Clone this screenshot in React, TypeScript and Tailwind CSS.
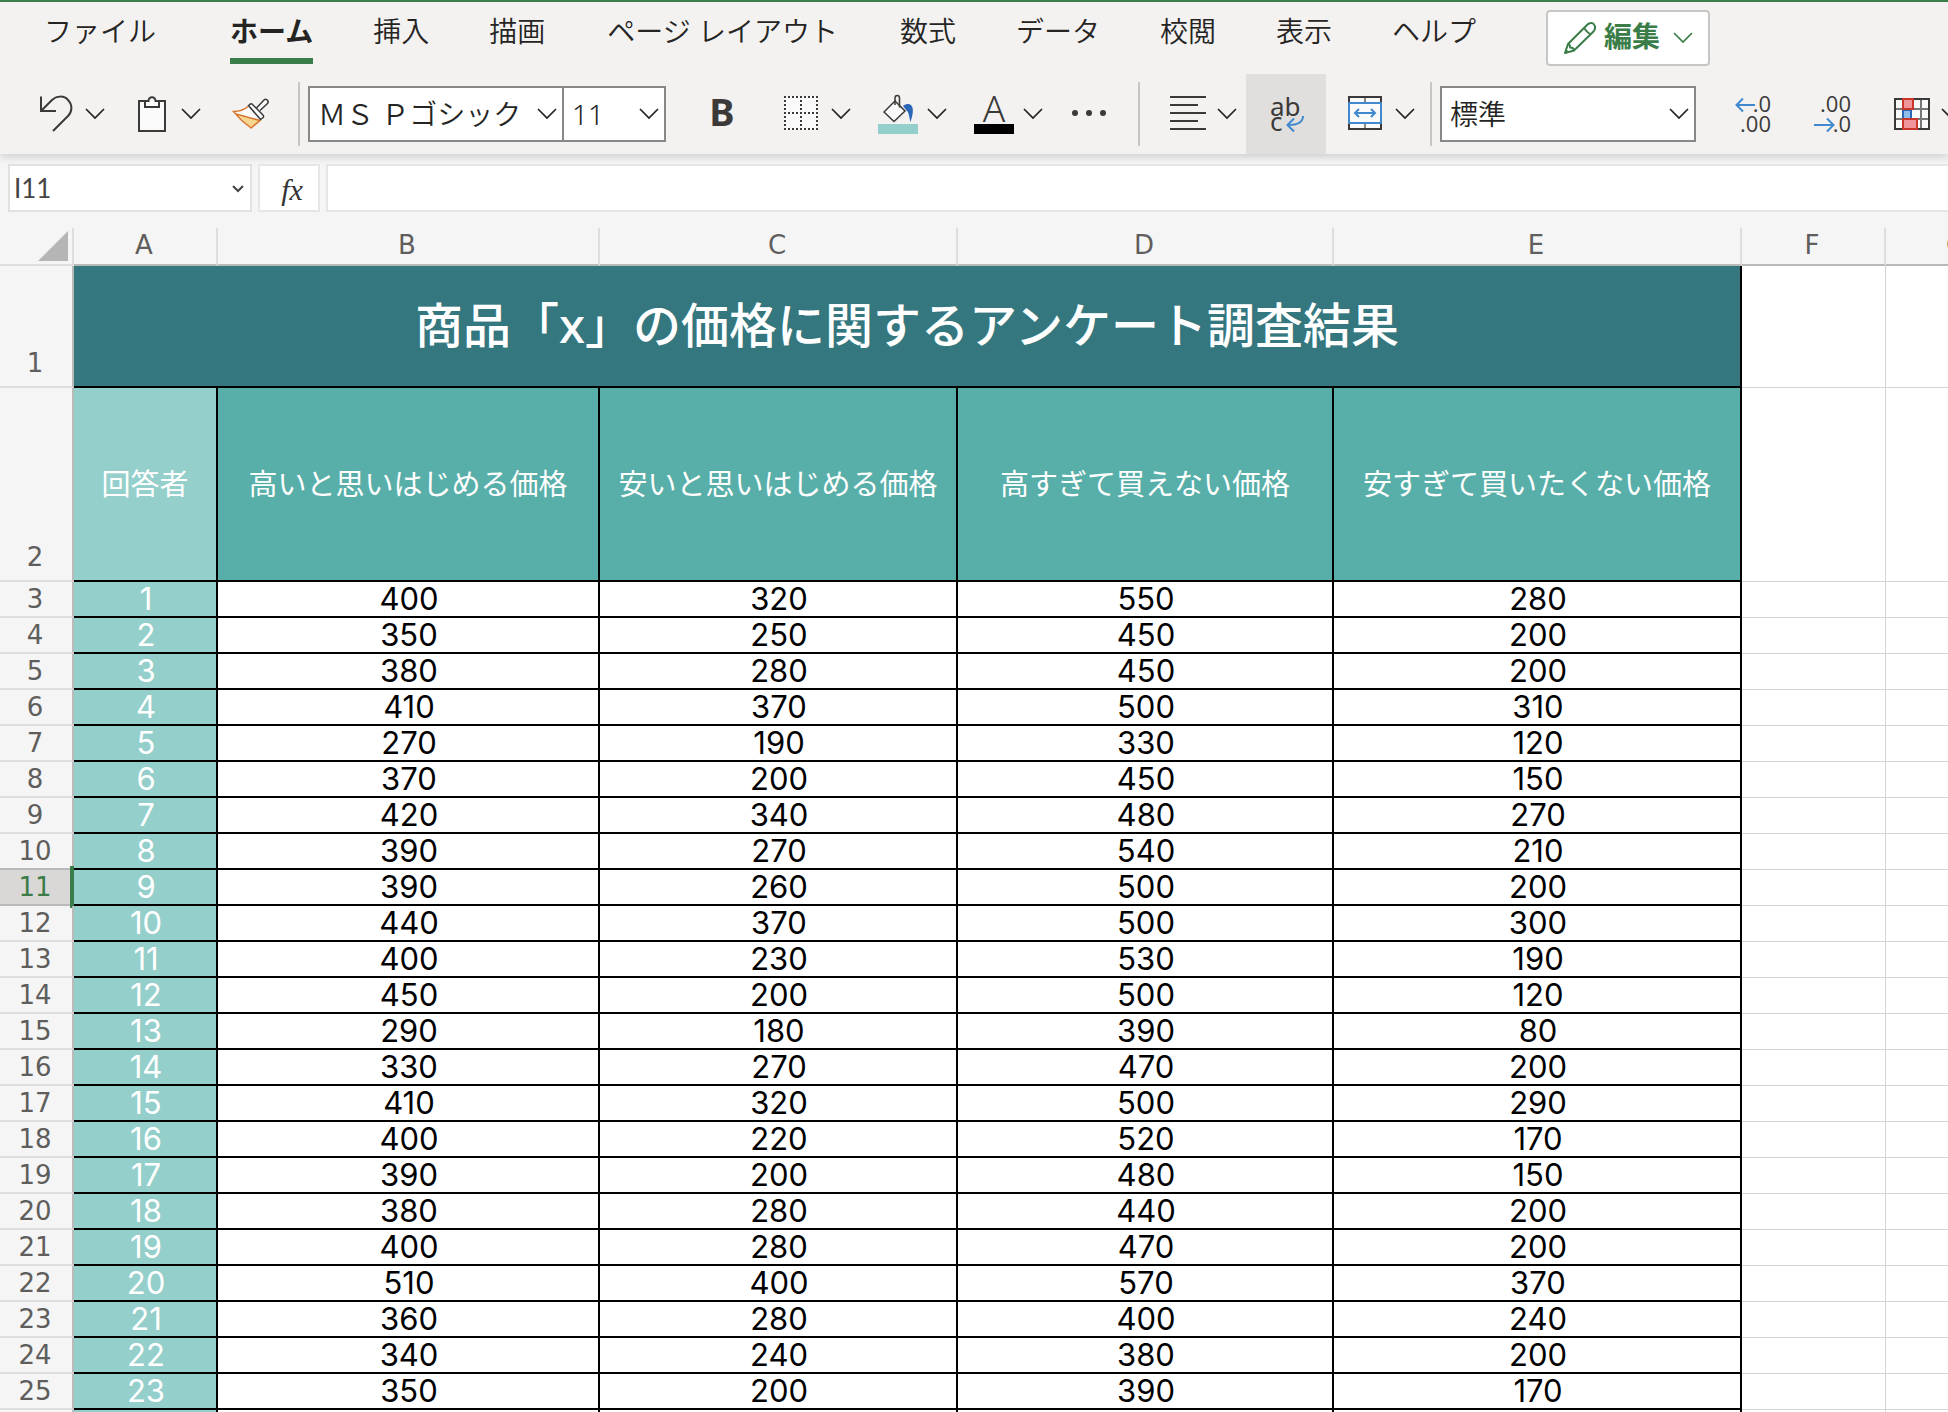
import React from 'react';

const tabs = ['ホーム', '挿入', '描画', 'ページ レイアウト', '数式', 'データ', '校閲', '表示', 'ヘルプ'];

const questions = ['高いと思いはじめる価格', '安いと思いはじめる価格', '高すぎて買えない価格', '安すぎて買いたくない価格'];

const answers = [
  [400, 320, 550, 280],
  [350, 250, 450, 200],
  [380, 280, 450, 200],
  [410, 370, 500, 310],
  [270, 190, 330, 120],
  [370, 200, 450, 150],
  [420, 340, 480, 270],
  [390, 270, 540, 210],
  [390, 260, 500, 200],
  [440, 370, 500, 300],
  [400, 230, 530, 190],
  [450, 200, 500, 120],
  [290, 180, 390, 80],
  [330, 270, 470, 200],
  [410, 320, 500, 290],
  [400, 220, 520, 170],
  [390, 200, 480, 150],
  [380, 280, 440, 200],
  [400, 280, 470, 200],
  [510, 400, 570, 370],
  [360, 280, 400, 240],
  [340, 240, 380, 200],
  [350, 200, 390, 170],
];

const SELECTED_ROW = 11;

function Chevron({ className = '' }: { className?: string }) {
  return (
    <svg aria-hidden="true" viewBox="0 0 22 22" className={`h-[22px] w-[22px] shrink-0 ${className}`} fill="none" stroke="currentColor" strokeWidth="1.7">
      <path d="M2 6 L11 15 L20 6" />
    </svg>
  );
}

function Icon({ children }: { children: React.ReactNode }) {
  return (
    <svg aria-hidden="true" viewBox="0 0 40 40" className="h-10 w-10 shrink-0 overflow-visible" fill="none" stroke="#3b3a39" strokeWidth="2">
      {children}
    </svg>
  );
}

function Tool({ label, className = '', split = false, children }: { label: string; className?: string; split?: boolean; children: React.ReactNode }) {
  return (
    <button type="button" aria-label={label} className={`flex h-20 shrink-0 items-center gap-2 ${className}`}>
      <Icon>{children}</Icon>
      {split && <Chevron />}
    </button>
  );
}

function Divider({ className }: { className: string }) {
  return <div className={`h-16 w-0.5 shrink-0 bg-[#c8c6c4] ${className}`} />;
}

function Picker({ label, value, className }: { label: string; value: string; className: string }) {
  return (
    <div className={`relative h-14 shrink-0 ${className}`}>
      <select aria-label={label} defaultValue={value} className="h-full w-full appearance-none border-2 border-[#8a8886] bg-white pr-8 pl-2 text-[28px] leading-9 font-[350]">
        <option>{value}</option>
      </select>
      <Chevron className="pointer-events-none absolute top-[17px] right-1.5" />
    </div>
  );
}

function Ribbon() {
  return (
    <header className="relative z-10 border-t-2 border-[#3a7d49] bg-[#f3f2f1] shadow-[0_3px_8px_rgba(0,0,0,0.16)]">
      <nav aria-label="リボン" className="flex h-[72px] items-start pl-3.5">
        <button type="button" className="mr-[14px] shrink-0 px-[30px] pt-[9px] text-[28px] leading-10 font-[350]">
          ファイル
        </button>
        {tabs.map((tab, i) => (
          <button
            key={tab}
            type="button"
            className={`shrink-0 pt-[9px] text-[28px] leading-10 ${tab.includes(' ') ? 'px-8' : 'px-[30px]'} ${i === 0 ? 'font-bold' : 'font-[350]'}`}
          >
            {tab}
            {i === 0 && <span className="mt-[7px] block h-1.5 bg-[#3a7d49]" />}
          </button>
        ))}
        <button type="button" className="mt-2 ml-10 flex h-14 shrink-0 items-center rounded border-2 border-[#c8c6c4] bg-white pr-3.5 pl-4 text-[28px] font-bold text-[#3a7d49]">
          <svg aria-hidden="true" viewBox="0 0 32 32" className="mr-2 h-8 w-8" fill="none" stroke="currentColor" strokeWidth="2" strokeLinejoin="round">
            <path d="M1 31 L4 22 L23 3 C26 0 29 1 30 2.500 C32 5 31 7.500 29.500 9.500 L10 28.500 Z" />
            <path d="M20 6 C22 9 24 11 26.500 12.500 M4 22 C5 22 6 23.500 6 25.500 C8.500 25.500 10 27 10 28.500 M1 31 L3.500 28.500" />
          </svg>
          <span className="pb-1 leading-9">編集</span>
          <Chevron className="ml-3" />
        </button>
      </nav>

      <div role="toolbar" aria-label="書式" className="flex h-20 items-center overflow-hidden pl-9">
        <Tool label="元に戻す" split>
          <path d="M5 2.500 V17 H20" />
          <path d="M5 17 L16 6 C20 2 28 1 32 6 C37 11 36 18 32 22 L17 37" />
        </Tool>
        <Tool label="貼り付け" split className="ml-[26px]">
          <rect x="7" y="7" width="26" height="30" fill="#fafafa" />
          <path d="M13 7 H16.500 C17 2 23 2 23.500 7 H27 V13 H13 Z" fill="#fafafa" />
        </Tool>
        <Tool label="書式のコピー" className="ml-7">
          <path d="M3.500 17.500 C9 18 15 16 18.500 12 L30.500 26 L21 34 Z" fill="#fafafa" stroke="none" />
          <path d="M8 21 L30 26.500 L21 34 Z" fill="#f6d58f" stroke="none" />
          <path d="M18 12.500 C14 16 9 17.500 3.500 17.500 C8 23 14 29 21 34 L30 26.500 L6 20" stroke="#d9752b" strokeWidth="1.5" />
          <path d="M26.500 14 L34 6 C36 4 39.500 7 37.500 9.500 L30 16.500" fill="#fafafa" strokeWidth="1.5" />
          <path d="M18.500 11.500 L20.500 10 C21.500 9.500 22 10 23 11 L32.500 20.500 C34 22 34 23 32.500 24 L30.500 25.500 Z" fill="#fafafa" strokeWidth="1.5" />
        </Tool>
        <Divider className="ml-7" />
        <Picker label="フォント" value="ＭＳ Ｐゴシック" className="ml-2 w-64" />
        <Picker label="フォント サイズ" value="11" className="-ml-0.5 w-[104px]" />
        <Tool label="太字" className="ml-9">
          <text x="20" y="32" textAnchor="middle" fontSize="38" fontWeight="700" fill="#3b3a39" stroke="none" fontFamily="Noto Sans">B</text>
        </Tool>
        <Tool label="罫線" split className="ml-10">
          <rect x="2" y="2" width="34" height="34" fill="#fafafa" stroke="none" />
          <path strokeDasharray="2 2" d="M2 3 H36 M2 19 H36 M2 35 H36 M3 2 V36 M19 2 V36 M35 2 V36" />
        </Tool>
        <Tool label="塗りつぶしの色" split className="ml-[26px]">
          <rect y="30" width="40" height="10" fill="#94cfcb" stroke="none" />
          <path d="M6 18 L17 7 L27 17 L16 27.500 Z" fill="#fafafa" strokeWidth="1.5" />
          <path d="M17 11 V4 C17 0.500 21.500 0.500 21.500 4 V13.500" strokeWidth="1.5" />
          <path d="M25 12 C30 8.500 34 10 34.800 15 C35.200 19 34 23 32.500 28 C31 23 31 18 28.500 16.500 Z" fill="#2b67b8" stroke="none" />
        </Tool>
        <Tool label="フォントの色" split className="ml-[26px]">
          <rect y="30" width="40" height="10" fill="#000" stroke="none" />
          <text x="20" y="28" textAnchor="middle" fontSize="37" fontWeight="300" fill="#3b3a39" stroke="none" fontFamily="Noto Sans">A</text>
        </Tool>
        <Tool label="その他のフォント オプション" className="ml-[26px]">
          <g fill="#3b3a39" stroke="none">
            <circle cx="5" cy="19" r="3" />
            <circle cx="19" cy="19" r="3" />
            <circle cx="33" cy="19" r="3" />
          </g>
        </Tool>
        <Divider className="ml-7" />
        <Tool label="配置" split className="ml-7">
          <path d="M2 3 H38 M2 11 H30 M2 19 H38 M2 27 H30 M2 35 H38" />
        </Tool>
        <Tool label="折り返して全体を表示する" className="ml-2 w-20 justify-center bg-[#e1dfdd]">
          <g fontFamily="Noto Sans" fontSize="26" fill="#3b3a39" stroke="none">
            <text x="4" y="22">ab</text>
            <text x="4" y="37">c</text>
          </g>
          <path d="M37 22 C37 28 33 31 22 31 M28 24.500 L21.500 31 L28 37.500" stroke="#4189cf" />
        </Tool>
        <Tool label="セルを結合して中央揃え" split className="ml-5">
          <rect x="3" y="3" width="32" height="32" fill="#fafafa" />
          <path d="M19 4 V8 M19 30 V34" stroke="#8a8886" />
          <rect x="3" y="9" width="32" height="20" fill="#fafafa" stroke="#4189cf" />
          <path d="M9 19 H29 M13 15 L9 19 L13 23 M25 15 L29 19 L25 23" stroke="#4189cf" />
        </Tool>
        <Divider className="ml-3.5" />
        <Picker label="表示形式" value="標準" className="ml-2 w-64" />
        <Tool label="小数点以下の表示桁数を増やす" className="ml-9">
          <path d="M23 11 H4.500 M11 4.500 L4.500 11 L11 17.500" stroke="#4189cf" />
          <g fontFamily="Open Sans" fontSize="22" fill="#3b3a39" stroke="none" textAnchor="end">
            <text x="39" y="18">.0</text>
            <text x="39" y="38">.00</text>
          </g>
        </Tool>
        <Tool label="小数点以下の表示桁数を減らす" className="ml-10">
          <path d="M2 31 H21.500 M15 24.500 L21.500 31 L15 37.500" stroke="#4189cf" />
          <g fontFamily="Open Sans" fontSize="22" fill="#3b3a39" stroke="none" textAnchor="end">
            <text x="39" y="18">.00</text>
            <text x="39" y="38">.0</text>
          </g>
        </Tool>
        <Tool label="条件付き書式" split className="ml-10">
          <rect x="3" y="5" width="34" height="30" fill="#fafafa" />
          <path d="M4 15 H36 M4 25 H36 M29 6 V34" stroke="#797775" />
          <rect x="11" y="16" width="8" height="9" fill="#8fbdea" stroke="#2b67b8" />
          <rect x="11" y="5" width="10" height="10" fill="#f0959a" stroke="#c8372a" />
          <rect x="11" y="25" width="14" height="10" fill="#f0959a" stroke="#c8372a" />
        </Tool>
      </div>
    </header>
  );
}

function FormulaBar() {
  return (
    <div className="flex h-[74px] gap-1.5 pt-2.5 pb-4 pl-2">
      <div className="flex w-[244px] shrink-0 items-center border-2 border-[#e1e1e1] bg-white pr-1">
        <input aria-label="名前ボックス" defaultValue="I11" className="min-w-0 flex-1 bg-transparent pl-1 font-['Lato'] text-[26px] leading-9 text-[#444] outline-none" />
        <button type="button" aria-label="名前の一覧">
          <svg aria-hidden="true" viewBox="0 0 16 16" className="h-4 w-4" fill="none" stroke="#444" strokeWidth="2">
            <path d="M3 6 L8 11 L13 6" />
          </svg>
        </button>
      </div>
      <button type="button" aria-label="関数の挿入" className="w-[62px] shrink-0 border-2 border-[#e6e6e6] bg-white pt-1 pl-1.5 font-['Liberation_Serif'] text-[30px] leading-9 text-[#333] italic">
        fx
      </button>
      <input aria-label="数式バー" className="min-w-0 flex-1 border-2 border-r-0 border-[#e6e6e6] bg-white px-2 text-[26px] outline-none" />
    </div>
  );
}

function RowHead({ n }: { n: number }) {
  const selected = n === SELECTED_ROW;
  return (
    <th
      scope="row"
      className={`relative border-r-2 border-b-2 border-r-[#b9b9b9] p-0 pr-0.5 align-bottom font-['DejaVu_Sans'] text-[26px] leading-[34px] font-normal ${
        selected ? 'border-b-[#b9b9b9] bg-[#dad8d6] text-[#3a7d49]' : n === SELECTED_ROW - 1 ? 'border-b-[#b9b9b9] text-[#605e5c]' : 'border-b-[#dedede] text-[#605e5c]'
      } ${n < 3 ? 'pb-1.5' : ''}`}
    >
      {n}
      {selected && <span className="absolute -top-1 -right-0.5 -bottom-1 w-1 bg-[#3a7d49]" />}
    </th>
  );
}

function EmptyCells() {
  return (
    <>
      <td className="border-r border-b border-[#d4d4d4] bg-white p-0" />
      <td className="border-r border-b border-[#d4d4d4] bg-white p-0" />
    </>
  );
}

function Sheet() {
  const numberCell = 'border-r-2 border-b-2 border-black p-0 pl-0.5 leading-8';
  return (
    <main className="min-h-0 flex-1 overflow-hidden">
      <table className="w-[2030px] table-fixed border-separate border-spacing-0 text-center">
        <colgroup>
          <col className="w-[74px]" />
          <col className="w-36" />
          <col className="w-[382px]" />
          <col className="w-[358px]" />
          <col className="w-[376px]" />
          <col className="w-[408px]" />
          <col className="w-36" />
          <col className="w-36" />
        </colgroup>
        <thead>
          <tr className="h-[38px]">
            <td className="border-r-2 border-b-2 border-r-[#dedede] border-b-[#dedede] p-0 pr-1">
              <svg aria-hidden="true" viewBox="0 0 30 30" className="ml-auto h-[30px] w-[30px]">
                <path d="M0 30 L30 0 V30 Z" fill="#b5b5b5" />
              </svg>
            </td>
            {['A', 'B', 'C', 'D', 'E', 'F', 'G'].map((c) => (
              <th key={c} scope="col" className="border-r-2 border-b-2 border-r-[#dedede] border-b-[#b9b9b9] p-0 pr-0.5 pb-0.5 font-['DejaVu_Sans'] text-[26px] leading-[34px] font-normal text-[#605e5c]">
                {c}
              </th>
            ))}
          </tr>
        </thead>
        <tbody>
          <tr className="h-[122px]">
            <RowHead n={1} />
            <td colSpan={5} className="border-r-2 border-b-2 border-black bg-[#34777f] p-0 pb-0.5 text-[48px] leading-[64px] font-medium text-white">
              商品「x」の価格に関するアンケート調査結果
            </td>
            <EmptyCells />
          </tr>
          <tr className="h-[194px] text-[29px] text-white">
            <RowHead n={2} />
            <td className="border-r-2 border-b-2 border-black bg-[#94cfcb] p-0">回答者</td>
            {questions.map((q) => (
              <td key={q} className="border-r-2 border-b-2 border-black bg-[#58aea8] p-0 whitespace-nowrap">
                {q}
              </td>
            ))}
            <EmptyCells />
          </tr>
          {answers.map((row, i) => (
            <tr key={i} className="h-9 font-['Inter'] text-[31px] text-black">
              <RowHead n={i + 3} />
              <td className={`${numberCell} bg-[#94cfcb] text-white`}>{i + 1}</td>
              {row.map((v, j) => (
                <td key={j} className={`${numberCell} bg-white`}>
                  {v}
                </td>
              ))}
              <EmptyCells />
            </tr>
          ))}
          <tr className="h-9">
            <td className="border-r-2 border-[#b9b9b9] p-0" />
            <td className="border-r-2 border-black bg-[#94cfcb] p-0" />
            {questions.map((q) => (
              <td key={q} className="border-r-2 border-black bg-white p-0" />
            ))}
            <EmptyCells />
          </tr>
        </tbody>
      </table>
    </main>
  );
}

export default function App() {
  return (
    <div className="flex h-screen flex-col overflow-hidden bg-[#f5f5f5] font-['Noto_Sans','Noto_Sans_CJK_JP',sans-serif] text-[#252423]">
      <Ribbon />
      <FormulaBar />
      <Sheet />
    </div>
  );
}
